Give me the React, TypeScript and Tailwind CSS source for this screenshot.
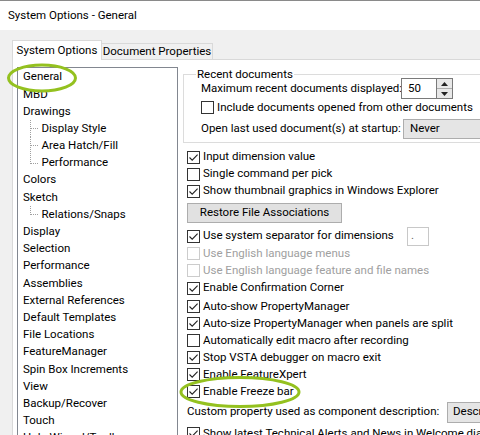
import React from 'react';

type TreeItem = { label: string; child?: boolean; last?: boolean };

const treeItems: TreeItem[] = [
  { label: 'General' },
  { label: 'MBD' },
  { label: 'Drawings' },
  { label: 'Display Style', child: true },
  { label: 'Area Hatch/Fill', child: true },
  { label: 'Performance', child: true, last: true },
  { label: 'Colors' },
  { label: 'Sketch' },
  { label: 'Relations/Snaps', child: true, last: true },
  { label: 'Display' },
  { label: 'Selection' },
  { label: 'Performance' },
  { label: 'Assemblies' },
  { label: 'External References' },
  { label: 'Default Templates' },
  { label: 'File Locations' },
  { label: 'FeatureManager' },
  { label: 'Spin Box Increments' },
  { label: 'View' },
  { label: 'Backup/Recover' },
  { label: 'Touch' },
  { label: 'Hole Wizard/Toolbox' },
];

const CheckBox = ({ checked, disabled }: { checked?: boolean; disabled?: boolean }) => (
  <span
    className={`w-[13px] h-[13px] border bg-white flex items-center justify-center shrink-0 ${
      disabled ? 'border-[#cccccc]' : 'border-[#333333]'
    }`}
  >
    {checked && (
      <svg width="11" height="11" viewBox="0 0 11 11">
        <path d="M1.5 5.5 L4.2 8.2 L9.6 2.6" stroke="#222" strokeWidth="1.1" fill="none" />
      </svg>
    )}
  </span>
);

const CheckRow = ({
  label,
  checked,
  disabled,
  h = 'h-[17px]',
}: {
  label: string;
  checked?: boolean;
  disabled?: boolean;
  h?: string;
}) => (
  <div className={`flex items-center gap-[3px] whitespace-nowrap ${h}`}>
    <CheckBox checked={checked} disabled={disabled} />
    <span className={disabled ? 'text-[#a0a0a0]' : 'text-black'}>{label}</span>
  </div>
);

// dotted connector for child rows of the tree
const TreeLine = ({ last }: { last?: boolean }) => (
  <svg width="10" height="17" className="shrink-0">
    <line x1="0.5" y1="0" x2="0.5" y2={last ? 9 : 17} stroke="#a0a0a0" strokeDasharray="1 1" />
    <line x1="1" y1="8.5" x2="9" y2="8.5" stroke="#a0a0a0" strokeDasharray="1 1" />
  </svg>
);

export default function App() {
  return (
    <div className="relative w-[480px] h-[435px] overflow-hidden bg-[#f0f0f0] font-['Roboto',sans-serif] text-[11.5px] text-black leading-none">
      {/* Title bar */}
      <div className="h-[30px] bg-white border-t border-[#8a8a8a] flex items-center pl-[8px] text-[11.5px] whitespace-nowrap">
        System Options - General
      </div>

      {/* Tabs */}
      <div className="flex items-end pt-[10px] pl-[12px] whitespace-nowrap">
        <div className="w-[90px] h-[20px] border border-b-0 border-[#d9d9d9] bg-white flex items-center justify-center">
          System Options
        </div>
        <div className="w-[111px] h-[17px] border-t border-r border-b border-[#d9d9d9] bg-[#f0f0f0] flex items-center justify-center">
          Document Properties
        </div>
        <div className="flex-1 h-[17px] border-b border-[#d9d9d9]" />
      </div>

      {/* Tab page */}
      <div className="ml-[12px] h-[400px] border-l border-[#d9d9d9] bg-white flex">
        {/* Tree */}
        <div className="mt-[7px] ml-[4px] w-[161px] h-[400px] border border-[#828790] bg-white pt-[0.5px] shrink-0">
          {treeItems.map((it, i) =>
            it.child ? (
              <div key={i} className="h-[17.2px] flex items-center pl-[12px] whitespace-nowrap">
                <TreeLine last={it.last} />
                <span className="ml-[1.5px]">{it.label}</span>
              </div>
            ) : (
              <div key={i} className="h-[17.2px] flex items-center pl-[5px] whitespace-nowrap">
                {it.label}
              </div>
            )
          )}
        </div>

        {/* Right column */}
        <div className="flex-1 min-w-0">
          {/* Recent documents group */}
          <div className="mt-[14px] ml-[5px] w-[320px] border border-[#dcdcdc] pb-[3px]">
            <div className="h-[8px] -mt-[9px] ml-[12px]">
              <span className="bg-white px-[1px] leading-[17px] inline-block whitespace-nowrap">Recent documents</span>
            </div>
            <div className="mt-[4px] h-[21px] flex items-center pl-[17px] whitespace-nowrap">
              <span className="w-[200px] shrink-0">Maximum recent documents displayed:</span>
              <div className="h-[21px] flex shrink-0">
                <div className="w-[35px] h-[21px] border border-[#7a7a7a] border-r-0 flex items-center pl-[6px]">
                  50
                </div>
                <div className="w-[17px] h-[21px] border border-[#7a7a7a] flex flex-col">
                  <div className="flex-1 bg-[#e8e8e8] border-b border-[#adadad] flex items-center justify-center">
                    <svg width="7" height="4">
                      <path d="M0 4 L3.5 0 L7 4 Z" fill="#222" />
                    </svg>
                  </div>
                  <div className="flex-1 bg-[#e8e8e8] flex items-center justify-center">
                    <svg width="7" height="4">
                      <path d="M0 0 L3.5 4 L7 0 Z" fill="#222" />
                    </svg>
                  </div>
                </div>
              </div>
            </div>
            <div className="pl-[17px]">
              <CheckRow label="Include documents opened from other documents" />
            </div>
            <div className="mt-[3px] h-[20px] flex items-center pl-[17px] whitespace-nowrap">
              <span className="w-[202px] shrink-0">Open last used document(s) at startup:</span>
              <div className="w-[100px] h-[20px] shrink-0 bg-[#e5e5e5] border border-[#adadad] flex items-center pl-[6px]">
                Never
              </div>
            </div>
          </div>

          {/* Check options */}
          <div className="pl-[9px] mt-[5.5px]">
            <CheckRow label="Input dimension value" checked />
            <CheckRow label="Single command per pick" />
            <CheckRow label="Show thumbnail graphics in Windows Explorer" checked />
            <div className="mt-[3.5px] w-[155px] h-[20px] bg-[#e1e1e1] border border-[#adadad] flex items-center justify-center whitespace-nowrap">
              Restore File Associations
            </div>
            <div className="mt-[4.5px] h-[17.3px] flex items-center whitespace-nowrap">
              <div className="w-[220px] shrink-0 flex items-center gap-[3px]">
                <CheckBox checked />
                <span>Use system separator for dimensions</span>
              </div>
              <div className="w-[22px] h-[19px] shrink-0 border border-[#c8c8c8] flex items-center pl-[3px] text-[#666]">.</div>
            </div>
            <CheckRow label="Use English language menus" disabled h="h-[17.3px]" />
            <CheckRow label="Use English language feature and file names" disabled h="h-[17.3px]" />
            <CheckRow label="Enable Confirmation Corner" checked h="h-[17.3px]" />
            <div className="mt-[1.5px]">
              <CheckRow label="Auto-show PropertyManager" checked />
            </div>
            <CheckRow label="Auto-size PropertyManager when panels are split" checked />
            <CheckRow label="Automatically edit macro after recording" />
            <CheckRow label="Stop VSTA debugger on macro exit" checked />
            <CheckRow label="Enable FeatureXpert" checked />
            <CheckRow label="Enable Freeze bar" checked />
            <div className="mt-[1.5px] h-[21px] flex items-center whitespace-nowrap">
              <span className="w-[260px] shrink-0">Custom property used as component description:</span>
              <div className="w-[60px] h-[21px] shrink-0 bg-[#e5e5e5] border border-[#adadad] flex items-center pl-[5px]">
                Description
              </div>
            </div>
            <div className="mt-[2.5px]">
              <CheckRow label="Show latest Technical Alerts and News in Welcome dialog" checked />
            </div>
          </div>
        </div>
      </div>

      {/* Green highlight rings */}
      <svg className="absolute left-0 top-0 pointer-events-none" width="480" height="435">
        <ellipse cx="42" cy="78" rx="33.5" ry="13" fill="none" stroke="#94c11f" strokeWidth="3" />
        <ellipse cx="240" cy="392" rx="59" ry="14.5" fill="none" stroke="#94c11f" strokeWidth="3" />
      </svg>
    </div>
  );
}
